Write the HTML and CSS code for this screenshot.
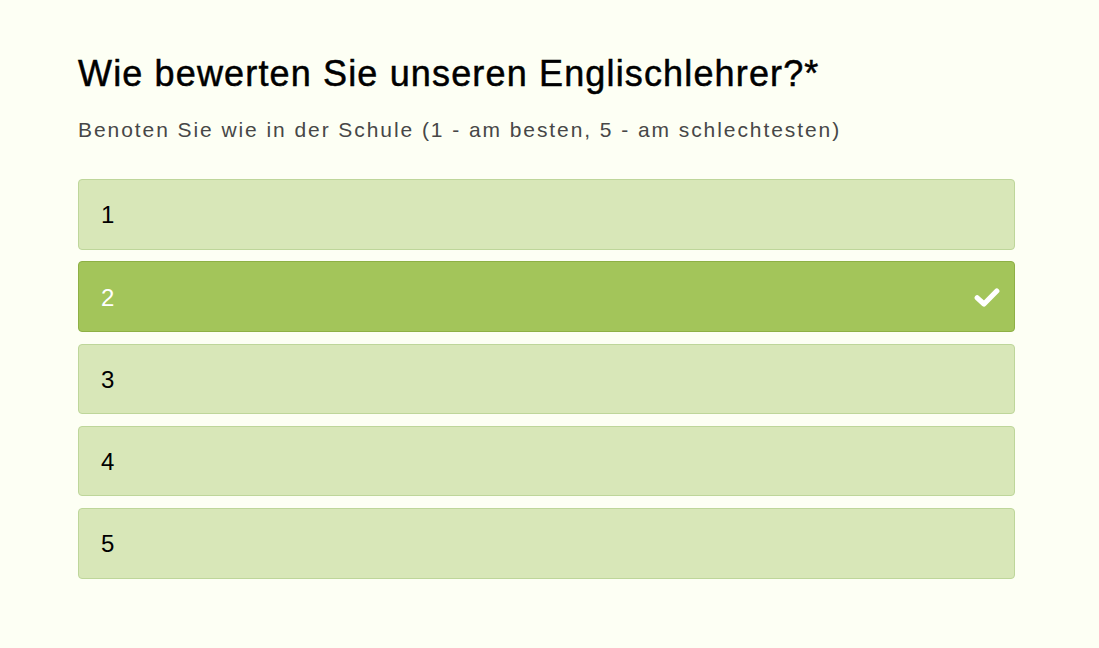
FILE: index.html
```html
<!DOCTYPE html>
<html lang="de">
<head>
<meta charset="utf-8">
<title>Frage</title>
<link rel="stylesheet" href="styles.css">
</head>
<body>
<main class="question">
  <h1 class="title">Wie bewerten Sie unseren Englischlehrer?*</h1>
  <p class="subtitle">Benoten Sie wie in der Schule (1 - am besten, 5 - am schlechtesten)</p>
  <ul class="options">
    <li class="option">1</li>
    <li class="option selected">2
      <svg class="check" viewBox="0 0 26 20" width="26" height="20"><path d="M3.2 10.8 L10 17 L22.8 4" fill="none" stroke="#fff" stroke-width="5.2" stroke-linecap="round" stroke-linejoin="round"/></svg>
    </li>
    <li class="option">3</li>
    <li class="option">4</li>
    <li class="option">5</li>
  </ul>
</main>
</body>
</html>
```
FILE: styles.css
```css
html, body {
  margin: 0;
  padding: 0;
  background: #fdfff4;
}
body {
  font-family: "Liberation Sans", Arial, sans-serif;
  color: #000;
}
.question {
  padding: 52px 84px 0 78px;
}
.title {
  margin: 0;
  font-size: 36px;
  font-weight: 400;
  line-height: 44px;
  letter-spacing: 1.15px;
  -webkit-text-stroke: 0.5px #000;
}
.subtitle {
  margin: 21px 0 0;
  font-size: 21px;
  line-height: 26px;
  color: #474747;
  letter-spacing: 1.93px;
}
.options {
  list-style: none;
  margin: 36px 0 0;
  padding: 0;
  display: flex;
  flex-direction: column;
  gap: 11.75px;
}
.option {
  box-sizing: border-box;
  height: 70.5px;
  border: 1px solid #bed69a;
  background: #d8e7b8;
  border-radius: 4px;
  display: flex;
  align-items: center;
  justify-content: space-between;
  padding: 2px 14px 0 22px;
  font-size: 24px;
}
.option.selected {
  background: #a3c55a;
  border-color: #8eb045;
  color: #fff;
}
.check {
  display: block;
  margin-top: -2px;
}
```
